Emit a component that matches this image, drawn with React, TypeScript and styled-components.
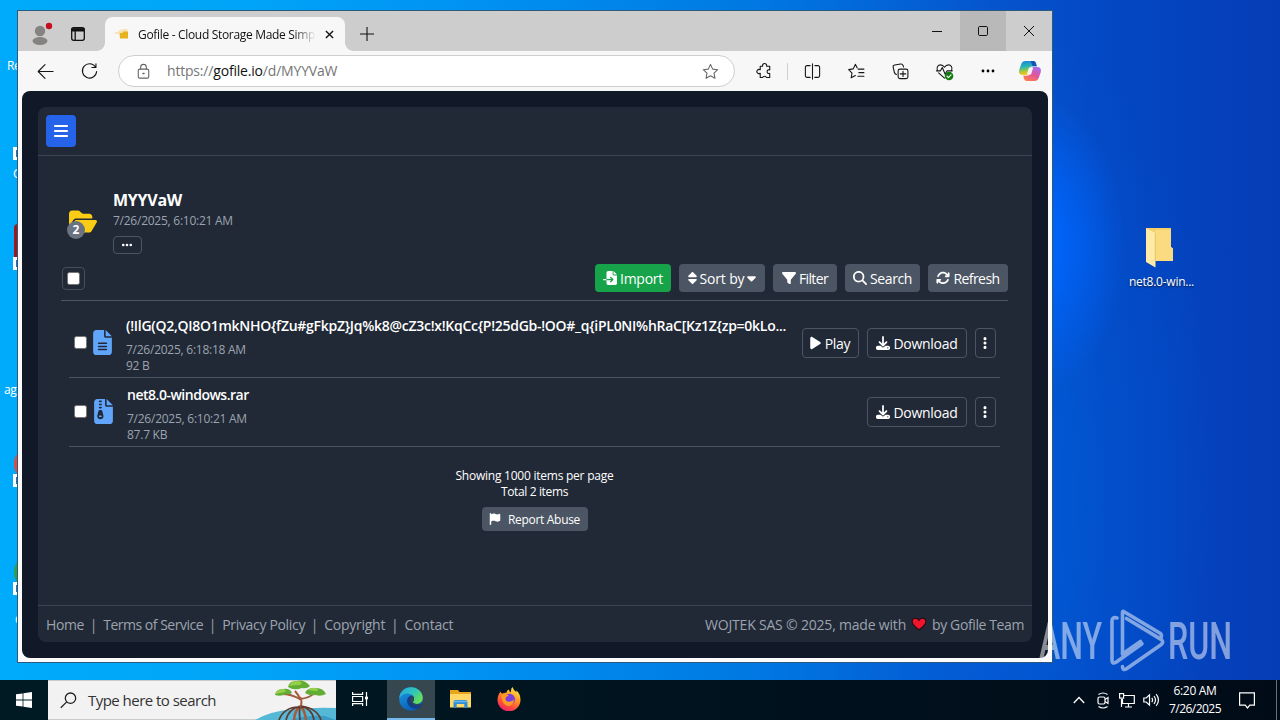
import React from "react";
import styled, { createGlobalStyle } from "styled-components";
import {
  FaArrowsRotate,
  FaBars,
  FaCaretDown,
  FaDownload,
  FaEllipsis,
  FaEllipsisVertical,
  FaFileImport,
  FaFileLines,
  FaFileZipper,
  FaFilter,
  FaFlag,
  FaFolderOpen,
  FaMagnifyingGlass,
  FaPlay,
  FaSort
} from "react-icons/fa6";

const footerLinks = [
  { label: "Home", spacing: -0.39 },
  { label: "Terms of Service", spacing: -0.49 },
  { label: "Privacy Policy", spacing: -0.33 },
  { label: "Copyright", spacing: -0.26 },
  { label: "Contact", spacing: -0.19 }
];

const files = [
  {
    name: "(!IlG(Q2,QI8O1mkNHO{fZu#gFkpZ}Jq%k8@cZ3c!x!KqCc{P!25dGb-!OO#_q{iPL0NI%hRaC[Kz1Z{zp=0kLo...",
    spacing: -0.27,
    date: "7/26/2025, 6:18:18 AM",
    size: "92 B",
    icon: <FaFileLines />,
    playable: true
  },
  {
    name: "net8.0-windows.rar",
    spacing: -0.49,
    date: "7/26/2025, 6:10:21 AM",
    size: "87.7 KB",
    icon: <FaFileZipper />,
    playable: false
  }
];

const TabStrip: React.FC = () => (
  <TitleBar>
    <Profile>
      <svg width="24" height="26" viewBox="0 0 24 26">
        <circle cx="11" cy="10" r="5.2" fill="#858381" />
        <ellipse cx="11" cy="20" rx="7.5" ry="4" fill="#858381" />
        <circle cx="20" cy="5" r="3.2" fill="#c50f1f" />
      </svg>
    </Profile>
    <Workspace>
      <svg width="16" height="16" viewBox="0 0 16 16" fill="none" stroke="#111" strokeWidth="1.3">
        <rect x="1.7" y="1.7" width="12.6" height="12.6" rx="2" />
        <path d="M1.5 3.8h13" strokeWidth="3.4" />
        <path d="M5.2 5v9" />
      </svg>
    </Workspace>
    <Tab>
      <svg width="15" height="14" viewBox="0 0 15 14">
        <path d="M3 4l5-2h4.500v4H3z" fill="#f7e3b5" />
        <path d="M4.500 6h3l1-1.500H13v7H5z" fill="#e8b21e" />
        <path d="M0 6h4" stroke="#f3d488" />
      </svg>
      <TabTitle>Gofile - Cloud Storage Made Simple</TabTitle>
      <svg width="9" height="9" viewBox="0 0 10 10" stroke="#111" strokeWidth="1.500">
        <path d="M1 1l8 8M9 1L1 9" />
      </svg>
    </Tab>
    <NewTab>
      <svg width="14" height="14" viewBox="0 0 14 14" stroke="#111" strokeWidth="1.1">
        <path d="M7 0v14M0 7h14" />
      </svg>
    </NewTab>
    <WindowButton>
      <svg width="10" height="10" viewBox="0 0 10 10" stroke="#111">
        <path d="M0 5.500h10" />
      </svg>
    </WindowButton>
    <WindowButton $active>
      <svg width="10" height="10" viewBox="0 0 10 10" stroke="#111" fill="none">
        <rect x=".5" y=".5" width="9" height="9" rx="1.2" />
      </svg>
    </WindowButton>
    <WindowButton>
      <svg width="10" height="10" viewBox="0 0 10 10" stroke="#111">
        <path d="M0 0l10 10M10 0L0 10" />
      </svg>
    </WindowButton>
  </TitleBar>
);

const Navigation: React.FC = () => (
  <NavBar>
    <NavButton>
      <NavIcon>
        <path d="M18 10H2.500M9.500 2.800L2.300 10l7.200 7.200" />
      </NavIcon>
    </NavButton>
    <NavButton>
      <NavIcon>
        <path d="M16.300 5.300A7.500 7.500 0 1 0 17.500 10M16.800 1.800v4h-4.300" />
      </NavIcon>
    </NavButton>
    <AddressBar>
      <NavIcon $muted>
        <rect x="4.500" y="7.500" width="11" height="9.500" rx="1.500" />
        <path d="M7 7.500V5.500a3 3 0 0 1 6 0v2" />
        <path d="M9.500 12.200h1" strokeWidth="1.600" />
      </NavIcon>
      <Url>
        https://<b>gofile.io</b>/d/MYYVaW
      </Url>
      <NavIcon $muted>
        <path d="M10 2.500l2.300 5 5.300.6-3.900 3.700 1 5.300L10 14.500l-4.700 2.600 1-5.300-3.900-3.700 5.300-.6z" />
      </NavIcon>
    </AddressBar>
    <NavButton>
      <NavIcon>
        <path d="M5.500 4.500H8a2.200 2.200 0 1 1 4.200 0h3.300v3.800a2 2 0 1 0 0 3.700v4.300h-3.400a2.200 2.200 0 0 0-4 0H5.500v-4.500a2.200 2.200 0 1 1 0-3.600z" />
      </NavIcon>
    </NavButton>
    <NavDivider />
    <NavButton>
      <NavIcon>
        <path d="M7.500 3.800H4.200a1.700 1.700 0 0 0-1.700 1.700v9a1.700 1.700 0 0 0 1.700 1.700h3.300M12.500 3.800h3.300a1.700 1.700 0 0 1 1.700 1.700v9a1.700 1.700 0 0 1-1.700 1.700h-3.300M10 2v16" />
      </NavIcon>
    </NavButton>
    <NavButton>
      <NavIcon>
        <path d="M11.800 7.500h6M12.500 11.200h5.300M11.500 15h6.300M10.800 6.200L8.800 2.500 6.600 7.200l-4.800.8 3.500 3.600-.9 5 4.400-2.300" />
      </NavIcon>
    </NavButton>
    <NavButton>
      <NavIcon>
        <rect x="7.500" y="7.500" width="10.300" height="10" rx="2" />
        <path d="M12.650 9.700v5.600M9.800 12.500h5.700M5.700 13.200c-1.400-.5-1.900-1.300-2.200-2.400L2.300 5.500c-.3-1.200.3-2 1.500-2.300l6.300-1.100c1.300-.2 2.100.3 2.600 1.500l.5 1.600" />
      </NavIcon>
    </NavButton>
    <NavButton>
      <NavIcon>
        <path d="M2.500 8.800C1.300 5.500 3.200 3 5.800 3c1.900 0 3.300 1.200 4.200 2.500C10.900 4.200 12.300 3 14.200 3c2.600 0 4.500 2.500 3.300 5.800M1.500 9.300h4.200l2-3.500 3 7 2-3.500h5.500M3.800 11.500L10 17" />
        <circle cx="14.800" cy="14.800" r="4.500" fill="#107c10" stroke="none" />
        <path d="M12.600 14.900l1.500 1.500 2.800-2.800" stroke="#fff" />
      </NavIcon>
    </NavButton>
    <NavButton>
      <svg width="14" height="4" viewBox="0 0 14 4">
        <circle cx="2" cy="2" r="1.400" />
        <circle cx="7" cy="2" r="1.400" />
        <circle cx="12" cy="2" r="1.400" />
      </svg>
    </NavButton>
    <Copilot>
      <svg width="24" height="22" viewBox="0 0 24 22">
        <defs>
          <linearGradient id="copilotLeft" x1="0" y1="0" x2=".2" y2="1">
            <stop offset="0" stopColor="#1b7ee0" />
            <stop offset=".45" stopColor="#28b6b5" />
            <stop offset=".75" stopColor="#a6c83b" />
            <stop offset="1" stopColor="#ffc61a" />
          </linearGradient>
          <linearGradient id="copilotRight" x1=".8" y1="0" x2=".2" y2="1">
            <stop offset="0" stopColor="#a66df0" />
            <stop offset=".5" stopColor="#e3549a" />
            <stop offset="1" stopColor="#ff8048" />
          </linearGradient>
        </defs>
        <path d="M7.500 1h7.800c1.600 0 2.200 1 2.700 2.500l.8 2.700h-3.600c-1.800 0-2.600.8-3.200 2.500L9.800 15H5C1.300 15 .4 12.600 1.500 9L3.300 4C4 2 5.300 1 7.500 1z" fill="url(#copilotLeft)" />
        <path d="M12.500 1h2.800c1.600 0 2.200 1 2.700 2.500l.8 2.700h-4.200z" fill="#1752b8" />
        <path d="M16.500 21H8.700c-1.600 0-2.200-1-2.700-2.500l-.8-2.700h3.600c1.800 0 2.600-.8 3.200-2.500L14.200 7H19c3.700 0 4.600 2.400 3.500 6l-1.800 5c-.7 2-2 3-4.200 3z" fill="url(#copilotRight)" />
        <path d="M11 7.500h4.300l-2.300 7H8.800z" fill="#f7f7f7" />
      </svg>
    </Copilot>
  </NavBar>
);

const GofilePage: React.FC = () => (
  <Page>
    <Card>
      <CardHeader>
        <MenuButton>
          <FaBars size={16} />
        </MenuButton>
      </CardHeader>
      <Content>
        <FolderInfo>
          <FolderIcon>
            <FaFolderOpen />
            <Badge>2</Badge>
          </FolderIcon>
          <div>
            <FolderName>MYYVaW</FolderName>
            <Meta>7/26/2025, 6:10:21 AM</Meta>
            <DotsButton>
              <FaEllipsis size={12} />
            </DotsButton>
          </div>
        </FolderInfo>
        <Toolbar>
          <SelectAll>
            <Checkbox />
          </SelectAll>
          <ToolButton $width={76} $green $spacing={-0.26}>
            <FaFileImport />
            Import
          </ToolButton>
          <ToolButton $width={86} $spacing={-0.15}>
            <FaSort className="narrow" />
            Sort by
            <FaCaretDown className="narrow" />
          </ToolButton>
          <ToolButton $width={64} $spacing={-0.62}>
            <FaFilter />
            Filter
          </ToolButton>
          <ToolButton $width={75} $spacing={-0.39}>
            <FaMagnifyingGlass />
            Search
          </ToolButton>
          <ToolButton $width={80} $spacing={-0.56}>
            <FaArrowsRotate />
            Refresh
          </ToolButton>
        </Toolbar>
        <FileList>
          {files.map((file, i) => (
            <FileRow key={file.name}>
              <Checkbox />
              <FileIcon $offset={i}>{file.icon}</FileIcon>
              <FileText>
                <FileName $spacing={file.spacing}>{file.name}</FileName>
                <Meta>{file.date}</Meta>
                <Meta>{file.size}</Meta>
              </FileText>
              <FileActions>
                {file.playable && (
                  <OutlineButton $width={57} $spacing={-0.3}>
                    <FaPlay className="play" />
                    Play
                  </OutlineButton>
                )}
                <OutlineButton $width={100} $spacing={-0.29}>
                  <FaDownload />
                  Download
                </OutlineButton>
                <OutlineButton $width={21} $spacing={0}>
                  <FaEllipsisVertical />
                </OutlineButton>
              </FileActions>
            </FileRow>
          ))}
        </FileList>
        <Summary>
          <SummaryLine $spacing={-0.24}>Showing 1000 items per page</SummaryLine>
          <SummaryLine $spacing={-0.37}>Total 2 items</SummaryLine>
          <ReportButton>
            <FaFlag size={12} />
            Report Abuse
          </ReportButton>
        </Summary>
      </Content>
      <CardFooter>
        <Links>
          {footerLinks.map((link, i) => (
            <React.Fragment key={link.label}>
              {i > 0 && <Separator>|</Separator>}
              <FooterText $spacing={link.spacing}>{link.label}</FooterText>
            </React.Fragment>
          ))}
        </Links>
        <Credits>
          <FooterText $spacing={-0.195}>WOJTEK SAS © 2025, made with</FooterText>
          <svg width="16" height="14" viewBox="0 0 16 14">
            <path d="M8 12.800C3.500 9.500 1.200 7 1.200 4.400 1.200 2.500 2.600 1.200 4.400 1.200 6 1.200 7.300 2 8 3.300 8.700 2 10 1.200 11.600 1.200c1.800 0 3.200 1.300 3.200 3.200 0 2.600-2.300 5.100-6.800 8.400z" fill="#f0142d" stroke="#2a0a10" strokeWidth="1.100" />
          </svg>
          <FooterText $spacing={-0.39}>by Gofile Team</FooterText>
        </Credits>
      </CardFooter>
    </Card>
  </Page>
);

const Watermark: React.FC = () => (
  <WatermarkBox>
    <svg width="194" height="64" viewBox="0 0 194 64">
      <g fill="#fff" fontFamily="Roboto, sans-serif" fontSize="52.500" fontWeight="500">
        <text x="1" y="51" textLength="63" lengthAdjust="spacingAndGlyphs">ANY</text>
        <text x="130" y="51" textLength="64" lengthAdjust="spacingAndGlyphs">RUN</text>
      </g>
      <g fill="none" stroke="#fff" strokeWidth="3.600" strokeLinejoin="round" strokeLinecap="round">
        <path d="M84.500 46V4.500q0-1.800 1.600-.8l36 21.500q2 1.300 1 4.300" />
        <path d="M79 10q-5-1.500-5 3v39q0 4.500 4 2.200l26-18.500" />
        <path d="M84.500 58.500q0 4.500 4 2.200l34.500-24q3.500-2.700 0-5.300L88.500 10.500M84.500 46l18-12.500" />
      </g>
    </svg>
  </WatermarkBox>
);

const TaskBar: React.FC = () => (
  <Bar>
    <StartButton>
      <svg width="16" height="16" viewBox="0 0 16 16" fill="#fff">
        <path d="M0 2.300l6.600-.9v6.200H0zM7.400 1.300L16 0v7.600H7.400zM0 8.400h6.600v6.200L0 13.700zM7.400 8.400H16V16l-8.600-1.300z" />
      </svg>
    </StartButton>
    <SearchBox>
      <svg width="17" height="17" viewBox="0 0 17 17" fill="none" stroke="#222" strokeWidth="1.300">
        <circle cx="10.500" cy="6.200" r="5.200" />
        <path d="M6.700 9.900L.8 15.800" />
      </svg>
      <SearchText>Type here to search</SearchText>
      <svg width="81" height="40" viewBox="0 0 81 40">
        <path d="M0 40q16-9 36-10.500Q60 27 81 28v12z" fill="#54b8d6" />
        <path d="M36 40q14-5 34-4l11 4z" fill="#3a9cc4" />
        <g fill="none" stroke="#a55a3c">
          <path d="M45 28q3-6 0-11M45 19Q36 14 27 14M45 19q10-1 14-6M45 20q-1-5-5-9" strokeWidth="2" />
          <path d="M45 26q-5 4-6 14M45 26q5 4 6 14" strokeWidth="2.500" />
        </g>
        <g fill="none" stroke="#60392f" strokeWidth="1.700">
          <path d="M44 27Q29 27 24 40M45 27q-11 1-14 13M46 27q11 1 13 13M46 26q16 2 20 14M45 27q-1 5 0 13" />
        </g>
        <g fill="#62ad35">
          <path d="M20 15q1-6 8-6 7-1 9 4-3 2-6 1-5 3-11 1z" />
          <path d="M33 7q1-6 8-6 8-2 14 5-3 3-8 2-8 3-14-1z" />
          <path d="M50 13q2-5 9-5 9-1 12 6-6 3-10 1-6 1-11-2z" />
        </g>
        <g fill="#96cf48">
          <path d="M20 14q2-5 8-5 4 1 2 3-5 1-10 2zM34 6q2-5 9-5 6 1 2 4-5 0-11 1zM53 10q3-3 8-2 4 2 0 3z" />
        </g>
      </svg>
    </SearchBox>
    <TaskButton>
      <svg width="16" height="16" viewBox="0 0 16 16" fill="none" stroke="#fff" strokeWidth="1.200">
        <path d="M.6 1v2.400h10V1M.6 15v-2.400h10V15M.6 5.500h10v5H.6zM14.500 1v14" />
        <path d="M13 7h3" strokeWidth="2.600" />
      </svg>
    </TaskButton>
    <TaskButton $active>
      <svg width="24" height="24" viewBox="0 0 24 24">
        <defs>
          <linearGradient id="edgeTop" x1="0" y1="0" x2="1" y2=".6">
            <stop offset="0" stopColor="#21a7e8" />
            <stop offset=".6" stopColor="#31c7b6" />
            <stop offset="1" stopColor="#67df54" />
          </linearGradient>
          <linearGradient id="edgeSide" x1="0" y1="0" x2=".6" y2="1">
            <stop offset="0" stopColor="#1b9fe3" />
            <stop offset="1" stopColor="#0c59b5" />
          </linearGradient>
        </defs>
        <circle cx="12" cy="12" r="11.800" fill="url(#edgeSide)" />
        <path d="M.3 11C.8 4.800 5.800.2 12 .2c6.800 0 11.800 5 11.800 10.600 0 4-3 6.200-6.300 6.200-2.700 0-4-1.200-3.500-2.300.4-.8 1-1.500 1-2.900 0-3.200-3.300-5.400-7-5.400-3.300 0-6 1.700-7.700 4.600z" fill="url(#edgeTop)" />
        <path d="M8.200 12.500c-.8 5 3.300 9.500 9 9.300 2-.2 3.700-1 5-2.300-1 .5-2.400.8-4 .8-5.500 0-9-3-10-7.800z" fill="#123f86" />
        <path d="M14 14.700c.6-1 1-1.600 1-2.900 0-1.200-.6-2.300-1.600-3.200-3 .2-5.200 2.300-5.200 5.200 1 4 4.500 6.500 10 6.500 2 0 4-1 5-3l-.2-.7q-2.400 1-5.500.4c-2.700 0-4-1.200-3.500-2.300z" fill="#123f86" />
        <path d="M14 14.700c.6-1 1-1.600 1-2.900 0-1.200-.6-2.300-1.600-3.200q-2.400 1.500-2.200 4.600 1.200 4.600 6.800 5.300 3.500 0 5.300-2.200-2.400 1.200-5.800.7c-2.700 0-4-1.200-3.500-2.300z" fill="#36474f" />
      </svg>
    </TaskButton>
    <TaskButton>
      <svg width="23" height="20" viewBox="0 0 23 20">
        <path d="M1 1h8l1.500 2H22v15H1z" fill="#e8a51c" />
        <path d="M1 5h21v13.500H1z" fill="#ffd867" />
        <path d="M4.500 19v-6q0-2 2-2h10q2 0 2 2v6h-3.200v-4H7.700v4z" fill="#2f8dd6" />
        <path d="M5 12.500h13" stroke="#67b8ee" strokeWidth="1.500" />
      </svg>
    </TaskButton>
    <TaskButton>
      <svg width="24" height="24" viewBox="0 0 24 24">
        <defs>
          <linearGradient id="fox" x1=".8" y1="0" x2=".3" y2="1">
            <stop offset="0" stopColor="#fff04a" />
            <stop offset=".4" stopColor="#ff9a24" />
            <stop offset=".75" stopColor="#ff4a3c" />
            <stop offset="1" stopColor="#e8216e" />
          </linearGradient>
        </defs>
        <path d="M3.800 4.500Q4 7 5.500 6.500q2-1 3.800-.7Q10 3 12 2.500q-.2 2 2 3Q13.500 2 15.500 0q.8 3 4 5.300l-.2-2Q23.500 7 23.500 13A11.500 11.300 0 0 1 .5 13Q.5 8 3.800 4.500z" fill="url(#fox)" />
        <circle cx="12.500" cy="12.300" r="5.500" fill="#7a3fe0" />
        <path d="M4.500 8.500q4-3 7.500.5-3.500 0-3.500 2.500 0 3.500 4 3.300 3-.3 4.500-2.300Q16.500 19 11 19 5 18 4.500 8.500z" fill="#ff9b24" />
      </svg>
    </TaskButton>
    <Tray>
      <TrayIcon>
        <svg width="12" height="8" viewBox="0 0 12 8" fill="none" stroke="#fff" strokeWidth="1.300">
          <path d="M.8 7L6 1.500 11.200 7" />
        </svg>
      </TrayIcon>
      <TrayIcon>
        <svg width="12" height="17" viewBox="0 0 12 17" fill="none" stroke="#fff" strokeWidth="1.200">
          <path d="M1.500 2.500Q6-.5 10.500 2.500M1.500 14.500q4.500 3 9 0M8 7.500l3-2v6l-3-2" />
          <rect x="1" y="5" width="7" height="7" rx="1.500" />
        </svg>
      </TrayIcon>
      <TrayIcon>
        <svg width="16" height="15" viewBox="0 0 16 15" fill="none" stroke="#fff" strokeWidth="1.200">
          <path d="M5 2.500h10.300v8H3.500V6M9.500 10.500v3.500M6 14h7M2.500 6v8" />
          <rect x=".6" y=".6" width="4" height="4.500" />
        </svg>
      </TrayIcon>
      <TrayIcon>
        <svg width="17" height="14" viewBox="0 0 17 14" fill="none" stroke="#fff" strokeWidth="1.200">
          <path d="M.8 5v4h2.400l3.300 3.200V1.800L3.200 5zM8.800 4.800q1.500 2.200 0 4.400M11 3q3 4 0 8M13.200 1.200q4.500 5.800 0 11.600" />
        </svg>
      </TrayIcon>
      <Clock>
        <ClockLine $spacing={-0.32}>6:20 AM</ClockLine>
        <ClockLine $spacing={-0.53}>7/26/2025</ClockLine>
      </Clock>
      <svg width="16" height="17" viewBox="0 0 16 17" fill="none" stroke="#fff" strokeWidth="1.200">
        <path d="M.6.8h14.800v12.400h-4.600L8.500 16l-2.300-2.800H.6z" />
      </svg>
    </Tray>
  </Bar>
);

const App: React.FC = () => {
  return (
    <Desktop>
      <GlobalStyle />
      <Wallpaper>
        <DesktopLabel $x={7} $y={58}>Re</DesktopLabel>
        <Shortcut $y={147} />
        <DesktopLabel $x={13} $y={166}>G</DesktopLabel>
        <AppGlyph $y={224} $height={42} $color="#a5131c" $radius={4} />
        <Shortcut $y={257} />
        <DesktopLabel $x={4} $y={382}>ag</DesktopLabel>
        <AppGlyph $y={446} $height={36} $color="#e34a3c" $radius={18} />
        <Shortcut $y={474} />
        <AppGlyph $y={554} $height={36} $color="#2f9e44" $radius={18} />
        <Shortcut $y={582} />
        <DesktopLabel $x={15} $y={612}>C</DesktopLabel>
        <DesktopFolder>
          <svg width="28" height="42" viewBox="0 0 28 42">
            <path d="M0 2h25v19l2 1.500V35H0z" fill="#f6cf69" />
            <path d="M9 4h16v17l2 1.500V35H9z" fill="#fadb80" />
            <path d="M0 2l9.500 5v34.500L0 36z" fill="#ffeaa6" />
            <path d="M9.300 7v28" stroke="#e8c467" strokeWidth="1" />
          </svg>
          net8.0-win...
        </DesktopFolder>
        <Window>
          <TabStrip />
          <Navigation />
          <GofilePage />
        </Window>
        <Watermark />
      </Wallpaper>
      <TaskBar />
    </Desktop>
  );
};

const GlobalStyle = createGlobalStyle`
  * {
    box-sizing: border-box;
  }
  body {
    margin: 0;
    overflow: hidden;
    font-family: "Open Sans", "Noto Sans", sans-serif;
  }
  svg {
    display: block;
    flex-shrink: 0;
  }
`;

const Desktop = styled.div`
  width: 1280px;
  height: 720px;
  display: flex;
  flex-direction: column;
  overflow: hidden;
`;

const Wallpaper = styled.div`
  position: relative;
  flex: 1;
  overflow: hidden;
  background:
    radial-gradient(ellipse 90px 150px at 1035px 245px, #0068ff 0%, rgba(0, 102, 255, 0.8) 30%, rgba(0, 90, 230, 0) 100%),
    radial-gradient(ellipse 200px 480px at 1020px 500px, rgba(0, 96, 220, 0.6) 0%, rgba(0, 90, 215, 0) 100%),
    linear-gradient(90deg, #00abfb 0px, #00a4f8 250px, #0091f2 480px, #0078e2 760px, #0556cf 980px, #0448c4 1100px, #053db6 1280px);
`;

const Window = styled.div`
  position: absolute;
  left: 17px;
  top: 10px;
  width: 1036px;
  height: 653px;
  display: flex;
  flex-direction: column;
  background: #fbfbfb;
  border: 1px solid #2c5a7c;
`;

const TitleBar = styled.div`
  height: 40px;
  display: flex;
  align-items: center;
  background: #cdcdcd;
`;

const Profile = styled.div`
  width: 42px;
  padding: 5px 0 0 11px;
`;

const Workspace = styled.div`
  width: 45px;
  padding: 6px 0 0 10px;
`;

const Tab = styled.div`
  position: relative;
  align-self: flex-end;
  display: flex;
  align-items: center;
  width: 240px;
  height: 34px;
  padding: 0 11px 0 10px;
  border-radius: 8px 8px 0 0;
  background: #f7f7f7;

  &::before,
  &::after {
    content: "";
    position: absolute;
    bottom: 0;
    width: 8px;
    height: 8px;
  }
  &::before {
    left: -8px;
    background: radial-gradient(circle at 0 0, transparent 7.5px, #f7f7f7 8px);
  }
  &::after {
    right: -8px;
    background: radial-gradient(circle at 100% 0, transparent 7.5px, #f7f7f7 8px);
  }
`;

const TabTitle = styled.span`
  flex: 1;
  margin: 0 10px 0 8px;
  overflow: hidden;
  white-space: nowrap;
  color: #111;
  font-size: 12px;
  letter-spacing: -0.32px;
  mask-image: linear-gradient(90deg, #000 155px, transparent 178px);
`;

const NewTab = styled.div`
  flex: 1;
  padding: 5px 0 0 15px;
`;

const WindowButton = styled.div<{ $active?: boolean }>`
  display: flex;
  align-items: center;
  justify-content: center;
  width: 46px;
  height: 40px;
  background: ${props => (props.$active ? "#b9b9b9" : "transparent")};
`;

const NavBar = styled.div`
  display: flex;
  align-items: center;
  height: 40px;
  padding-left: 5px;
  background: #f7f7f7;
`;

const NavButton = styled.div`
  display: flex;
  align-items: center;
  justify-content: center;
  width: 44px;
  flex-shrink: 0;
`;

const NavIcon = styled.svg.attrs({ viewBox: "0 0 20 20" })<{ $muted?: boolean }>`
  width: 19px;
  height: 19px;
  fill: none;
  stroke: ${props => (props.$muted ? "#666" : "#161616")};
  stroke-width: 1.15;
  stroke-linejoin: round;
  stroke-linecap: round;
`;

const AddressBar = styled.div`
  display: flex;
  align-items: center;
  width: 617px;
  height: 32px;
  margin: 0 7px 0 7px;
  padding: 0 14px 0 15px;
  border: 1px solid #cfcfcf;
  border-radius: 16px;
  background: #fff;
`;

const Url = styled.span`
  flex: 1;
  margin: -1px 0 0 14px;
  color: #767676;
  font-size: 14px;
  letter-spacing: -0.19px;

  b {
    color: #111;
    font-weight: 400;
  }
`;

const NavDivider = styled.div`
  width: 1px;
  height: 17px;
  margin: 0 2px 0 1px;
  background: #d0d0d0;
`;

const Copilot = styled.div`
  width: 40px;
  display: flex;
  justify-content: center;
`;

const Page = styled.div`
  flex: 1;
  display: flex;
  margin: 0 4px 4px;
  padding: 16px;
  border-radius: 8px;
  background: #111827;
`;

const Card = styled.div`
  flex: 1;
  display: flex;
  flex-direction: column;
  border-radius: 8px;
  background: #212936;
`;

const CardHeader = styled.div`
  height: 49px;
  padding: 8px;
  border-bottom: 1px solid #3b4554;
`;

const MenuButton = styled.div`
  display: flex;
  align-items: center;
  justify-content: center;
  width: 30px;
  height: 32px;
  border-radius: 4px;
  color: #fff;
  background: #2563eb;
`;

const Content = styled.div`
  flex: 1;
  padding: 33px 24px 0 23px;
`;

const FolderInfo = styled.div`
  display: flex;
  height: 75px;
  padding-left: 8px;
`;

const FolderIcon = styled.div`
  position: relative;
  width: 44px;
  padding-top: 20px;
  color: #facc15;

  svg {
    width: 28px;
    height: 25px;
  }
`;

const Badge = styled.span`
  position: absolute;
  left: -2px;
  top: 32px;
  width: 18px;
  height: 18px;
  border-radius: 50%;
  background: #6b7280;
  color: #fff;
  font-size: 12px;
  font-weight: 700;
  line-height: 18px;
  text-align: center;
`;

const FolderName = styled.div`
  color: #fff;
  font-size: 16px;
  font-weight: 700;
  line-height: 22px;
  margin-bottom: 2px;
  letter-spacing: -0.26px;
`;

const Meta = styled.div`
  color: #9ca3af;
  font-size: 12px;
  line-height: 16px;
  letter-spacing: -0.25px;
`;

const DotsButton = styled.div`
  display: flex;
  align-items: center;
  justify-content: center;
  width: 29px;
  height: 18px;
  margin-top: 7px;
  padding-right: 1px;
  border: 1px solid #4b5563;
  border-radius: 4px;
  color: #fff;
`;

const Toolbar = styled.div`
  display: flex;
  align-items: flex-start;
  gap: 8px;
  height: 37px;
  border-bottom: 1px solid #4b5563;
`;

const SelectAll = styled.div`
  display: flex;
  align-items: center;
  justify-content: center;
  width: 23px;
  height: 23px;
  margin: 3px auto 0 1px;
  border: 1px solid #434d5b;
  border-radius: 4px;
`;

const Checkbox = styled.div`
  flex-shrink: 0;
  width: 13px;
  height: 13px;
  border: 1px solid #767676;
  border-radius: 2.5px;
  background: #fff;
`;

const ToolButton = styled.div<{ $width: number; $spacing: number; $green?: boolean }>`
  display: flex;
  align-items: center;
  justify-content: center;
  gap: 3px;
  width: ${props => props.$width}px;
  height: 28px;
  border-radius: 4px;
  color: #fff;
  font-size: 14px;
  letter-spacing: ${props => props.$spacing}px;
  white-space: nowrap;
  background: ${props => (props.$green ? "#16a34a" : "#4b5563")};

  svg {
    width: 14px;
    height: 14px;
  }
  svg.narrow {
    width: 9px;
  }
`;

const FileList = styled.div`
  padding: 8px 8px 0;
`;

const FileRow = styled.div`
  display: flex;
  align-items: center;
  height: 69px;
  padding: 0 4px 1px 5px;
  border-bottom: 1px solid #4b5563;
`;

const FileIcon = styled.div<{ $offset: number }>`
  width: 33px;
  margin-left: ${props => 6 + props.$offset}px;
  color: #60a5fa;

  svg {
    width: 19px;
    height: 25px;
  }
`;

const FileText = styled.div`
  flex: 1;
  min-width: 0;
  align-self: flex-start;
  padding-top: 7px;
`;

const FileName = styled.div<{ $spacing: number }>`
  margin-bottom: 6px;
  color: #fff;
  font-size: 14px;
  font-weight: 600;
  line-height: 20px;
  letter-spacing: ${props => props.$spacing}px;
  white-space: nowrap;
`;

const FileActions = styled.div`
  display: flex;
  gap: 8px;
  margin: 1px 0 0 14px;
`;

const OutlineButton = styled.div<{ $width: number; $spacing: number }>`
  display: flex;
  align-items: center;
  justify-content: center;
  gap: 4px;
  width: ${props => props.$width}px;
  height: 30px;
  padding-right: 1px;
  border: 1px solid #4b5563;
  border-radius: 4px;
  color: #fff;
  font-size: 14px;
  letter-spacing: ${props => props.$spacing}px;

  svg {
    width: 14px;
    height: 14px;
  }
  svg.play {
    width: 11px;
  }
`;

const Summary = styled.div`
  display: flex;
  flex-direction: column;
  align-items: center;
  padding-top: 21px;
`;

const SummaryLine = styled.div<{ $spacing: number }>`
  color: #fff;
  font-size: 12px;
  line-height: 16px;
  letter-spacing: ${props => props.$spacing}px;
`;

const ReportButton = styled.div`
  display: flex;
  align-items: center;
  justify-content: center;
  gap: 7px;
  width: 106px;
  height: 24px;
  margin-top: 7px;
  border-radius: 4px;
  background: #4b5563;
  color: #fff;
  font-size: 12px;
  letter-spacing: -0.31px;
`;

const CardFooter = styled.div`
  display: flex;
  align-items: center;
  justify-content: space-between;
  height: 37px;
  padding: 0 8px;
  border-top: 1px solid #3b4554;
`;

const Links = styled.div`
  display: flex;
`;

const FooterText = styled.span<{ $spacing: number }>`
  color: #9ca3af;
  font-size: 14px;
  letter-spacing: ${props => props.$spacing}px;
  white-space: nowrap;
`;

const Separator = styled.span`
  width: 19.2px;
  color: #9ca3af;
  font-size: 14px;
  text-align: center;
`;

const Credits = styled.div`
  display: flex;
  align-items: center;
  gap: 5px;
`;

const WatermarkBox = styled.div`
  position: absolute;
  left: 1038px;
  top: 608px;
  opacity: 0.5;
`;

const DesktopLabel = styled.span<{ $x: number; $y: number }>`
  position: absolute;
  left: ${props => props.$x}px;
  top: ${props => props.$y}px;
  color: #fff;
  font-size: 12px;
  line-height: 16px;
  letter-spacing: -0.3px;
  white-space: nowrap;
`;

const Shortcut = styled.div<{ $y: number }>`
  position: absolute;
  left: 13px;
  top: ${props => props.$y}px;
  width: 12px;
  height: 13px;
  border: 3px solid #fff;
  background: #2b6fb5;
`;

const AppGlyph = styled.div<{ $y: number; $height: number; $color: string; $radius: number }>`
  position: absolute;
  left: 14px;
  top: ${props => props.$y}px;
  width: 36px;
  height: ${props => props.$height}px;
  border-radius: ${props => props.$radius}px;
  background: ${props => props.$color};
`;

const DesktopFolder = styled.div`
  position: absolute;
  left: 1124px;
  top: 226px;
  width: 75px;
  display: flex;
  flex-direction: column;
  align-items: center;
  gap: 6px;
  color: #fff;
  font-size: 12px;
  line-height: 16px;
  letter-spacing: -0.25px;
  text-shadow: 0 1px 2px rgba(0, 0, 0, 0.7);

  svg {
    margin-right: 4px;
  }
`;

const Bar = styled.div`
  display: flex;
  height: 40px;
  background: linear-gradient(90deg, #001a24 0, #00141f 600px, #010b18 1280px);
`;

const StartButton = styled.div`
  display: flex;
  align-items: center;
  justify-content: center;
  width: 48px;
`;

const SearchBox = styled.div`
  display: flex;
  align-items: center;
  width: 288px;
  padding-left: 12px;
  border: solid #c9cccd;
  border-width: 1px 0;
  background: #f2f2f2;
`;

const SearchText = styled.span`
  flex: 1;
  margin-left: 11px;
  color: #333;
  font-size: 15px;
  letter-spacing: -0.53px;
  white-space: nowrap;
`;

const TaskButton = styled.div<{ $active?: boolean }>`
  display: flex;
  align-items: center;
  justify-content: center;
  width: 48px;
  margin-left: 1px;
  border-bottom: 2px solid ${props => (props.$active ? "#76b9ed" : "transparent")};
  background: ${props => (props.$active ? "#36474f" : "transparent")};

  &:nth-child(3) {
    margin: 0 2px 0 0;
  }
`;

const Tray = styled.div`
  flex: 1;
  display: flex;
  align-items: center;
  justify-content: flex-end;
  margin-right: 3px;
  padding-right: 21px;
  border-right: 1px solid #66717a;
`;

const TrayIcon = styled.div`
  width: 24px;
  display: flex;
  justify-content: center;
`;

const Clock = styled.div`
  width: 64px;
  margin: -1px 12px 0 0;
  text-align: center;
`;

const ClockLine = styled.div<{ $spacing: number }>`
  color: #fff;
  font-size: 12px;
  line-height: 18px;
  letter-spacing: ${props => props.$spacing}px;
`;

export default App;
